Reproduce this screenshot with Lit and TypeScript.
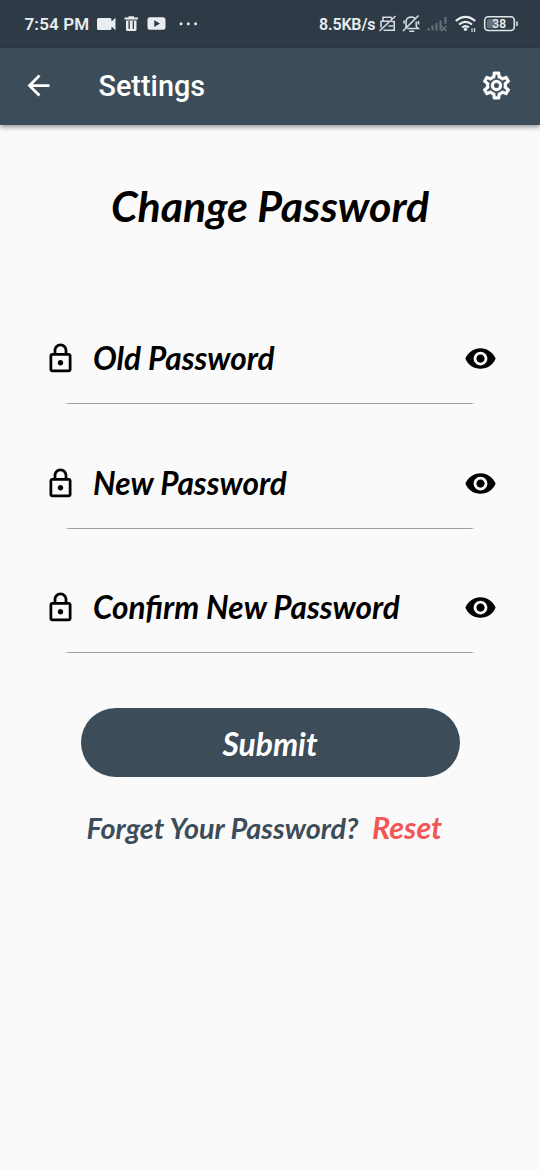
import { LitElement, html, css } from "lit";
import { customElement, property } from "lit/decorators.js";

@customElement("status-bar")
class StatusBar extends LitElement {
  static styles = css`
    :host { display: flex; height: 48px; background: #2e3b46; color: #e9edf0; box-sizing: border-box; padding-left: 24.5px; font: 600 17px/47px Roboto, sans-serif; }
    .left { display: flex; align-items: center; width: 294.5px; }
    .time { width: 71.5px; white-space: nowrap; letter-spacing: 0.15px; }
    .right { display: flex; align-items: center; }
    .speed { width: 59px; font-size: 16px; letter-spacing: -0.15px; white-space: nowrap; }
    svg { display: block; }
    .level { font: 600 12px Roboto, sans-serif; fill: #e9edf0; }
  `;
  render() {
    return html`
      <div class="left">
        <span class="time">7:54 PM</span>
        <svg width="104" height="20" viewBox="96 14 104 20" fill="#e9edf0">
          <path d="M98.5 18h11.5q1.5 0 1.5 1.5v2l4-3.700v12.400l-4-3.700v2q0 1.500-1.500 1.500H98.500q-1.500 0-1.500-1.500v-9q0-1.500 1.500-1.500z"/>
          <path fill-rule="evenodd" d="M124.500 17.500h4v-1.300h5.500v1.300h4v2h-13.500zM126 20.500h10.500v9q0 1.500-1.500 1.500h-7.500q-1.500 0-1.500-1.500zM128.500 21v8h1.300v-8zM132.700 21v8h1.300v-8z"/>
          <path fill-rule="evenodd" d="M150 17.300h13q2.500 0 2.500 2.500v7.500q0 2.500-2.500 2.500h-13q-2.500 0-2.500-2.500v-7.500q0-2.500 2.500-2.500zM154.300 20.300v6.600l5.700-3.300z"/>
          <circle cx="181" cy="23.700" r="1.500"/><circle cx="188.300" cy="23.700" r="1.500"/><circle cx="195.600" cy="23.700" r="1.500"/>
        </svg>
      </div>
      <div class="right">
        <span class="speed">8.5KB/s</span>
        <svg width="142" height="24" viewBox="378 12 142 24" fill="none" stroke="#d5dbdf" stroke-width="1.600">
          <path d="M383 21v-3.800h8l1 1.500M380.500 21.300h8.500M381 21v6.500M383.500 30.300h10.700v-8.800h-3M379.500 31L395.500 16M388.500 26h4.500"/>
          <path d="M406 27.500v-5.500q0-4.500 5-5 2.500 0 3.700 1.200M416.300 21.500v5l2 2h-11M409.300 31.200h5M404 20.500v3M418.500 21v3.500M403 31l15.500-15.500"/>
          <g stroke="#66727c" stroke-width="2"><path d="M428.500 30.500v-2.500M432.500 30.500v-5M436.500 30.500v-7.500M440.500 30.500v-10M445.500 24v-7"/><path stroke-width="1.500" d="M441.500 26l5 5M446.500 26l-5 5"/></g>
          <g stroke="#e9edf0" stroke-width="2.200"><path d="M455.800 21q9.700-8.300 19.400 0M459 24.500q6.500-5.400 13 0M462 27.500q3.500-2.800 7 0"/></g>
          <circle cx="465.500" cy="29.300" r="1.700" fill="#e9edf0" stroke="none"/>
          <path stroke-width="1.200" d="M472 28.300v4M474.500 28v4"/>
          <rect x="484.700" y="16.700" width="29.600" height="13.800" rx="3.500" stroke="#e0e5e8"/>
          <rect x="487" y="19" width="9" height="9.300" rx="1.500" fill="#66717b" stroke="none"/>
          <path d="M517 21.500v4.500" stroke-width="1.700"/>
          <text class="level" x="499.200" y="28" text-anchor="middle" stroke="none">38</text>
        </svg>
      </div>`;
  }
}

@customElement("password-row")
class PasswordRow extends LitElement {
  @property() label = "";
  static styles = css`
    :host { display: block; height: 124.5px; }
    .row { display: flex; align-items: center; height: 66px; padding: 0 43.5px; }
    svg { display: block; flex: none; }
    .label { flex: 1; margin: -1px 0 0 16.5px; font: italic 700 31.55px/40px Lato, sans-serif; color: #000; white-space: nowrap; }
    .line { height: 1px; margin: 11.5px 65px 0; background: linear-gradient(90deg, transparent, #a0a0a0 4px, #a0a0a0 calc(100% - 4px), transparent); }
  `;
  render() {
    return html`
      <div class="row">
        <svg width="33" height="33" viewBox="0 0 24 24"><path d="M18 8h-1V6c0-2.760-2.240-5-5-5S7 3.240 7 6v2H6c-1.100 0-2 .9-2 2v10c0 1.100.9 2 2 2h12c1.100 0 2-.9 2-2V10c0-1.100-.9-2-2-2zM9 6c0-1.660 1.340-3 3-3s3 1.340 3 3v2H9V6zm9 14H6V10h12v10zm-6-3c1.100 0 2-.9 2-2s-.9-2-2-2-2 .9-2 2 .9 2 2 2z"/></svg>
        <span class="label">${this.label}</span>
        <svg width="33" height="33" viewBox="0 0 24 24"><path d="M12 4.500C7 4.500 2.730 7.610 1 12c1.730 4.390 6 7.500 11 7.500s9.270-3.110 11-7.500c-1.730-4.390-6-7.500-11-7.500zM12 17c-2.760 0-5-2.240-5-5s2.240-5 5-5 5 2.240 5 5-2.240 5-5 5zm0-8c-1.660 0-3 1.340-3 3s1.340 3 3 3 3-1.340 3-3-1.340-3-3-3z"/></svg>
      </div>
      <div class="line"></div>`;
  }
}

@customElement("app-root")
class AppRoot extends LitElement {
  static styles = css`
    :host { display: flex; flex-direction: column; height: 1170px; background: #fafafa; overflow: hidden; }
    .bar { display: flex; align-items: center; height: 76.5px; box-sizing: border-box; padding: 0 27px 1.5px 21.5px; background: #3c4d59; box-shadow: 0 2px 5px rgba(0,0,0,.42); color: #fff; flex: none; }
    .bar svg { display: block; fill: #fff; }
    .bar .gear { stroke: #fff; stroke-width: .3; }
    .title { flex: 1; margin-left: 44px; font: 500 28.8px/34px Roboto, sans-serif; }
    h1 { margin: 54.5px 0 0; height: 54px; text-align: center; font: italic 700 42.8px/54px Lato, sans-serif; color: #000; white-space: nowrap; }
    .fields { margin-top: 92.5px; }
    .submit { display: block; width: 379px; height: 69px; margin: 9px auto 0 80.5px; padding: 3px 0 0; border: 0; border-radius: 35px; background: #3c4d59; color: #fff; font: italic 700 31.8px/66px Lato, sans-serif; }
    .foot { display: flex; align-items: baseline; margin: 31px 0 0 86.5px; font: italic 700 28.8px/38px Lato, sans-serif; color: #3c4d59; white-space: nowrap; }
    .ask { width: 285.5px; }
    .reset { color: #f25757; font-size: 30.4px; }
  `;
  render() {
    return html`
      <status-bar></status-bar>
      <header class="bar">
        <svg width="33" height="33" viewBox="0 0 24 24"><path d="M20 11H7.830l5.590-5.590L12 4l-8 8 8 8 1.410-1.410L7.830 13H20v-2z"/></svg>
        <span class="title">Settings</span>
        <svg class="gear" width="33" height="33" viewBox="0 0 24 24"><path d="M19.430 12.980c.04-.32.07-.64.07-.98 0-.34-.03-.66-.07-.98l2.110-1.650c.19-.15.24-.42.12-.64l-2-3.460c-.09-.16-.26-.25-.44-.25-.06 0-.12.010-.17.030l-2.490 1c-.52-.4-1.080-.73-1.690-.98l-.38-2.650C14.460 2.180 14.250 2 14 2h-4c-.25 0-.46.18-.49.42l-.38 2.650c-.61.25-1.170.59-1.690.98l-2.490-1c-.06-.02-.12-.03-.18-.03-.17 0-.34.09-.43.25l-2 3.460c-.13.22-.07.49.12.64l2.110 1.650c-.04.32-.07.65-.07.98 0 .33.030.66.070.98l-2.110 1.650c-.19.15-.24.42-.12.64l2 3.460c.09.16.26.25.44.25.06 0 .12-.01.17-.03l2.490-1c.52.4 1.080.73 1.690.98l.38 2.650c.03.24.24.42.49.42h4c.25 0 .46-.18.49-.42l.38-2.650c.61-.25 1.170-.59 1.690-.98l2.490 1c.06.02.12.03.18.03.17 0 .34-.09.43-.25l2-3.460c.12-.22.07-.49-.12-.64l-2.110-1.650zm-1.980-1.710c.04.31.05.52.05.73 0 .21-.02.43-.05.73l-.14 1.130.89.700 1.080.84-.7 1.210-1.270-.51-1.040-.42-.9.680c-.43.32-.84.56-1.250.73l-1.060.43-.16 1.130-.2 1.350h-1.400l-.19-1.350-.16-1.130-1.060-.43c-.43-.18-.83-.41-1.230-.71l-.91-.7-1.060.43-1.270.51-.7-1.210 1.080-.84.89-.7-.14-1.130c-.03-.31-.05-.54-.05-.74s.02-.43.05-.73l.14-1.130-.89-.7-1.080-.84.7-1.210 1.270.51 1.040.42.9-.68c.43-.32.84-.56 1.250-.73l1.060-.43.16-1.130.2-1.350h1.390l.19 1.350.16 1.130 1.060.43c.43.18.83.41 1.230.71l.91.7 1.060-.43 1.270-.51.7 1.210-1.070.85-.89.7.14 1.130zM12 8c-2.210 0-4 1.790-4 4s1.790 4 4 4 4-1.790 4-4-1.790-4-4-4zm0 6c-1.100 0-2-.9-2-2s.9-2 2-2 2 .9 2 2-.9 2-2 2z"/></svg>
      </header>
      <h1>Change Password</h1>
      <div class="fields">
        ${["Old Password", "New Password", "Confirm New Password"].map((l) => html`<password-row .label=${l}></password-row>`)}
      </div>
      <button class="submit">Submit</button>
      <div class="foot"><span class="ask">Forget Your Password?</span><span class="reset">Reset</span></div>`;
  }
}
